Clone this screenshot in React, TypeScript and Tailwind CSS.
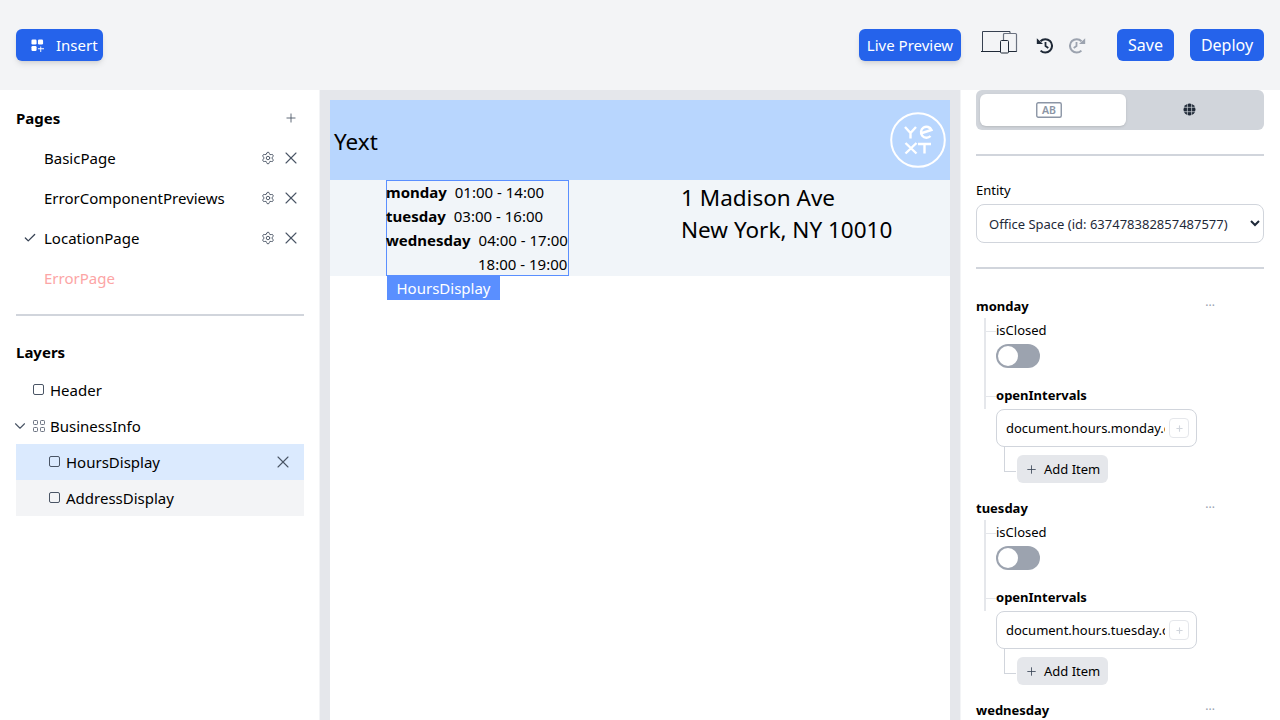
import React from "react";
import { Check, ChevronDown, Plus, Settings, X } from "lucide-react";

const font = "font-['Noto_Sans','Open_Sans',sans-serif]";

function BlueButton({ children, className }: { children: React.ReactNode; className: string }) {
  return <button className={`h-8 flex items-center rounded-md bg-[#2563eb] text-white ${className}`}>{children}</button>;
}

function InsertIcon() {
  return (
    <svg width="13" height="13" viewBox="0 0 14 14" fill="white">
      <rect x="0.5" y="0.5" width="5.5" height="5.5" rx="1.3" />
      <rect x="7.5" y="0.5" width="5.5" height="5.5" rx="1.3" />
      <rect x="0.5" y="7.5" width="5.5" height="5.5" rx="1.3" />
      <path d="M10 8h1v2h3v1h-3v3h-1v-3H7.5v-1H10z" />
    </svg>
  );
}

function DevicesIcon() {
  return (
    <svg width="37" height="23" viewBox="0 0 37 23" fill="none">
      <path d="M1.5 20.5V0.5h27.5v2" stroke="#374151" />
      <path d="M0 20.5h36" stroke="#1f2937" />
      <path d="M22.5 9V3.5a1 1 0 0 1 1-1h11a1 1 0 0 1 1 1v17" stroke="#6b7280" strokeWidth="1.2" />
      <rect x="19.5" y="9.5" width="8" height="12.5" rx="1" fill="#f3f4f6" stroke="#1f2937" />
    </svg>
  );
}

function HistoryIcon({ flip, color }: { flip?: boolean; color: string }) {
  return (
    <svg width="17" height="17" viewBox="0 0 17 17" fill="none" className={flip ? "-scale-x-100" : ""}>
      <path d="M4.5 4.2A6.7 6.7 0 1 1 4.6 13.6" stroke={color} strokeWidth="2" />
      <path d="M0.8 1.2L7 7H0.8z" fill={color} />
      <path d="M9.5 5v4l2.8 2" stroke={color} strokeWidth="1.8" />
    </svg>
  );
}

function Header() {
  return (
    <div className="h-[90px] shrink-0 bg-[#f3f4f6] flex items-center px-4">
      <BlueButton className="w-[87px] pl-[15px] shadow-md text-[15px]">
        <span className="mr-[12px]">
          <InsertIcon />
        </span>
        <span>Insert</span>
      </BlueButton>
      <div className="ml-auto flex items-center">
        <BlueButton className="w-[102px] justify-center shadow-md text-[15px]">Live Preview</BlueButton>
        <div className="ml-[20px] mb-[5px]">
          <DevicesIcon />
        </div>
        <div className="ml-[18px]">
          <HistoryIcon color="#1f2937" />
        </div>
        <div className="ml-[16px]">
          <HistoryIcon flip color="#9ca3af" />
        </div>
        <BlueButton className="ml-[31px] w-[57px] justify-center text-base">Save</BlueButton>
        <BlueButton className="ml-4 w-[74px] justify-center text-base">Deploy</BlueButton>
      </div>
    </div>
  );
}

function PageRow({ name, active, error }: { name: string; active?: boolean; error?: boolean }) {
  return (
    <div className="h-10 flex items-center">
      <div className="w-7 pl-[7px] shrink-0">
        {active && <Check size={14} className="text-gray-700" strokeWidth={2.2} />}
      </div>
      <span className={error ? "text-[#fca5a5]" : "text-black"}>{name}</span>
      {!error && (
        <div className="ml-auto flex items-center gap-[6px] pr-[3px] text-gray-600">
          <Settings size={14} strokeWidth={1.6} />
          <X size={20} strokeWidth={1.3} />
        </div>
      )}
    </div>
  );
}

function SquareIcon() {
  return <div className="w-[11px] h-[11px] -mt-px border border-gray-600 rounded-[2px]" />;
}

function Sidebar() {
  return (
    <div className="w-[320px] shrink-0 bg-white pl-4 pr-[15px] pt-[15px] border-r border-gray-100">
      <div className="flex items-center justify-between h-[26px]">
        <span className="font-bold text-black">Pages</span>
        <Plus size={14} strokeWidth={1.5} className="text-gray-600 mr-[6px]" />
      </div>
      <div className="mt-[7px] pb-4 border-b-2 border-gray-300">
        <PageRow name="BasicPage" />
        <PageRow name="ErrorComponentPreviews" />
        <PageRow name="LocationPage" active />
        <PageRow name="ErrorPage" error />
      </div>
      <div className="font-bold text-black mt-[24px] h-6 flex items-center">Layers</div>
      <div className="mt-[8px]">
        <div className="h-9 flex items-center pl-[17px] gap-[6px]">
          <SquareIcon />
          <span>Header</span>
        </div>
        <div className="h-9 flex items-center">
          <ChevronDown size={18} className="text-gray-600 -ml-[5px]" strokeWidth={1.5} />
          <svg width="12" height="12" viewBox="0 0 12 12" fill="none" stroke="#6b7280" className="ml-1 -mt-px">
            <rect x="0.5" y="0.5" width="4" height="4" rx="0.8" />
            <rect x="7.5" y="0.5" width="4" height="4" rx="0.8" />
            <rect x="0.5" y="7.5" width="4" height="4" rx="0.8" />
            <rect x="7.5" y="7.5" width="4" height="4" rx="0.8" />
          </svg>
          <span className="ml-[5px]">BusinessInfo</span>
        </div>
        <div className="h-9 flex items-center pl-[33px] gap-[6px] bg-[#dbeafe]">
          <SquareIcon />
          <span>HoursDisplay</span>
          <X size={20} strokeWidth={1.3} className="ml-auto mr-[11px] text-gray-600" />
        </div>
        <div className="h-9 flex items-center pl-[33px] gap-[6px] bg-[#f3f4f6]">
          <SquareIcon />
          <span>AddressDisplay</span>
        </div>
      </div>
    </div>
  );
}

function YextLogo() {
  return (
    <svg width="56" height="56" viewBox="0 0 56 56" fill="none" stroke="white" strokeWidth="2.4">
      <circle cx="28" cy="28" r="26.8" strokeWidth="2" />
      <path d="M15 15l5.5 6 5.5-6M20.5 21v5.5" />
      <path d="M30.5 21.5l11-3.5a5.5 5.5 0 1 0-1 6" />
      <path d="M15.5 31l11 10.5M26.5 31l-11 10.5" />
      <path d="M28 32h13M34.5 32v9.5" />
    </svg>
  );
}

function HoursRow({ day, time }: { day: string; time: string }) {
  return (
    <div className="flex gap-2 whitespace-nowrap">
      <span className="font-bold">{day}</span>
      <span>{time}</span>
    </div>
  );
}

function Canvas() {
  return (
    <div className="flex-1 bg-[#e5e7eb] px-[10px] pt-[10px]">
      <div className="bg-white h-full">
        <div className="h-20 bg-[#b8d6fe] flex items-center justify-between pl-1 pr-[4px] text-[22.5px] text-black">
          <span className="pt-[3px]">Yext</span>
          <YextLogo />
        </div>
        <div className="h-24 bg-[#f1f5f9] flex pl-[56px]">
          <div className="relative w-[183px] h-24 border border-[#5a8fff] text-black leading-6">
            <div className="-ml-px -mt-px">
              <HoursRow day="monday" time="01:00 - 14:00" />
              <HoursRow day="tuesday" time="03:00 - 16:00" />
              <HoursRow day="wednesday" time="04:00 - 17:00" />
              <div className="pl-[92px] whitespace-nowrap">18:00 - 19:00</div>
            </div>
            <div className="absolute left-0 top-[95px] w-[113px] h-6 bg-[#5a8fff] text-white flex items-center justify-center">
              HoursDisplay
            </div>
          </div>
          <div className="ml-[112px] text-[22.5px] leading-8 text-black pt-[2px]">
            <div>1 Madison Ave</div>
            <div>New York, NY 10010</div>
          </div>
        </div>
      </div>
    </div>
  );
}

function Tick({ top }: { top: number }) {
  return <div style={{ top }} className="absolute left-0 w-[10px] h-px bg-gray-200" />;
}

function DayField({ day }: { day: string }) {
  return (
    <div className="h-[202px] text-[13px] text-black">
      <div className="h-6 flex items-center justify-between w-[240px]">
        <span className="font-bold pt-[2px]">{day}</span>
        <span className="text-gray-400 text-xs leading-none mr-[1px]">···</span>
      </div>
      <div className="relative ml-2 border-l-2 border-gray-200 pl-[10px] h-[91px]">
        <Tick top={13} />
        <Tick top={78} />
        <div className="h-[26px] flex items-center">isClosed</div>
        <div className="w-11 h-6 rounded-full bg-[#9ca3af] p-[2px]">
          <div className="w-5 h-5 rounded-full bg-white" />
        </div>
        <div className="mt-[16px] h-6 flex items-center font-bold">openIntervals</div>
      </div>
      <div className="ml-5 w-[201px] h-[38px] border border-gray-300 rounded-lg flex items-center pl-[9px]">
        <span className="w-[159px] pt-[2px] overflow-hidden whitespace-nowrap">document.hours.{day}.openIntervals</span>
        <div className="ml-[4px] w-5 h-5 border border-gray-200 rounded flex items-center justify-center">
          <Plus size={9} strokeWidth={3} className="text-gray-300" />
        </div>
      </div>
      <div className="relative ml-[28px] h-[36px]">
        <div className="absolute left-0 top-0 w-[12px] h-[25px] border-l border-b border-gray-300" />
        <button className="absolute left-[13px] top-2 w-[91px] h-7 bg-[#e5e7eb] rounded-md flex items-center pl-2 gap-[6px]">
          <Plus size={13} strokeWidth={1.5} className="text-gray-700" />
          <span className="pt-[2px]">Add Item</span>
        </button>
      </div>
    </div>
  );
}

function RightPanel() {
  return (
    <div className="w-[320px] shrink-0 bg-white pl-[15px] pr-4 overflow-hidden border-l border-gray-100">
      <div className="h-10 bg-[#d1d5db] rounded-md p-1 flex">
        <div className="w-[146px] pr-2 bg-white rounded-md shadow-sm flex items-center justify-center">
          <svg width="26" height="16" viewBox="0 0 26 16" fill="none">
            <rect x="0.75" y="0.75" width="24.5" height="14.5" rx="1.5" stroke="#8b95a5" strokeWidth="1.4" />
            <text x="13" y="12" textAnchor="middle" fontSize="10.5" fill="#8b95a5" fontWeight="600">
              AB
            </text>
          </svg>
        </div>
        <div className="flex-1 pr-2 flex items-center justify-center">
          <svg width="13" height="13" viewBox="0 0 13 13" fill="#1f2937" className="-mt-px">
            <circle cx="6.5" cy="6.5" r="6" />
            <path d="M0 4.3h13M0 8.7h13M4.4 0v13M8.6 0v13" stroke="#d1d5db" strokeWidth="0.7" />
          </svg>
        </div>
      </div>
      <div className="mt-6 border-t-2 border-gray-300" />
      <div className="mt-[25px] h-5 flex items-center text-[13px] text-black">Entity</div>
      <select className="mt-[3px] w-full h-[39px] px-2 border border-gray-300 rounded-lg bg-white text-[13px] text-gray-800">
        <option>Office Space (id: 637478382857487577)</option>
      </select>
      <div className="mt-6 mb-[25px] border-t-2 border-gray-300" />
      <DayField day="monday" />
      <DayField day="tuesday" />
      <DayField day="wednesday" />
    </div>
  );
}

export default function App() {
  return (
    <div className={`${font} w-[1280px] h-[720px] overflow-hidden flex flex-col text-[15px] text-black`}>
      <Header />
      <div className="flex flex-1 min-h-0">
        <Sidebar />
        <Canvas />
        <RightPanel />
      </div>
    </div>
  );
}
